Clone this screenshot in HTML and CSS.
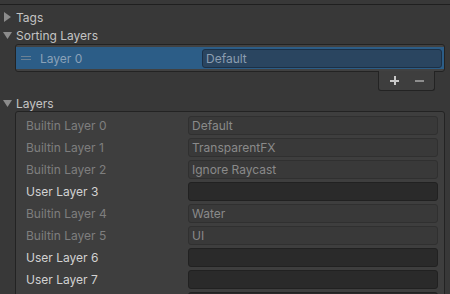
FILE: index.html
```html
<!DOCTYPE html>
<html lang="en">
<head>
    <meta charset="UTF-8">
    <title>Tags and Layers</title>
    <link rel="stylesheet" href="styles.css">
</head>
<body>
    <div class="topline"></div>

    <div class="foldout">
        <svg class="arrow" width="10" height="10" viewBox="0 0 10 10"><polygon points="1,0 8,5 1,10" /></svg>
        <span>Tags</span>
    </div>

    <div class="foldout">
        <svg class="arrow" width="10" height="10" viewBox="0 0 10 10"><polygon points="0,2 9,2 4.5,9" /></svg>
        <span>Sorting Layers</span>
    </div>

    <div class="list sorting">
        <div class="sort-row">
            <span class="handle"></span>
            <span class="sort-name">Layer 0</span>
            <div class="field sel-field">Default</div>
        </div>
    </div>
    <div class="list-footer">
        <div class="footer-box">
            <span class="btn plus"></span>
            <span class="btn minus"></span>
        </div>
    </div>

    <div class="foldout layers-head">
        <svg class="arrow" width="10" height="10" viewBox="0 0 10 10"><polygon points="0,2 9,2 4.5,9" /></svg>
        <span>Layers</span>
    </div>

    <div class="list layers">
        <div class="layer-row builtin">
            <span class="label">Builtin Layer 0</span>
            <div class="field">Default</div>
        </div>
        <div class="layer-row builtin">
            <span class="label">Builtin Layer 1</span>
            <div class="field">TransparentFX</div>
        </div>
        <div class="layer-row builtin">
            <span class="label">Builtin Layer 2</span>
            <div class="field">Ignore Raycast</div>
        </div>
        <div class="layer-row user">
            <span class="label">User Layer 3</span>
            <div class="field"></div>
        </div>
        <div class="layer-row builtin">
            <span class="label">Builtin Layer 4</span>
            <div class="field">Water</div>
        </div>
        <div class="layer-row builtin">
            <span class="label">Builtin Layer 5</span>
            <div class="field">UI</div>
        </div>
        <div class="layer-row user">
            <span class="label">User Layer 6</span>
            <div class="field"></div>
        </div>
        <div class="layer-row user">
            <span class="label">User Layer 7</span>
            <div class="field"></div>
        </div>
        <div class="layer-row user">
            <span class="label"></span>
            <div class="field"></div>
        </div>
    </div>
</body>
</html>
```

FILE: styles.css
```css
body {
    margin: 0;
    padding: 0;
    height: 294px;
    overflow: hidden;
    background: #383838;
    color: #c4c4c4;
    font-family: 'Inter', 'Noto Sans', sans-serif;
    font-size: 12px;
}

.topline {
    height: 4px;
    border-bottom: 1px solid #1f1f1f;
    margin-bottom: 3px;
}

.foldout {
    height: 18px;
    display: flex;
    align-items: center;
    padding-left: 3px;
}

.foldout .arrow {
    fill: #8c8c8c;
    margin-right: 3px;
}

.list {
    margin: 0 5px 0 15px;
    border: 1px solid #232323;
    border-radius: 3px;
    background: #414141;
}

.sorting {
    padding: 2px 0;
}

.sort-row {
    height: 22px;
    background: #2c5d87;
    display: flex;
    align-items: center;
    padding-left: 5px;
    padding-right: 2px;
}

.handle {
    width: 10px;
    height: 4px;
    border-top: 1px solid #6c8194;
    border-bottom: 1px solid #6c8194;
    margin-right: 9px;
    box-sizing: border-box;
}

.sort-name {
    color: #8aa1b8;
    width: 162px;
}

.field {
    flex: 1;
    height: 19px;
    box-sizing: border-box;
    border: 1px solid #212121;
    border-radius: 3px;
    background: #2a2a2a;
    padding-left: 3px;
    line-height: 17px;
    color: #8a8a8a;
}

.sel-field {
    background: #2a4560;
    border-color: #1c3046;
    color: #8c9db0;
}

.list-footer {
    display: flex;
    justify-content: flex-end;
    margin-right: 15px;
    margin-top: -1px;
}

.footer-box {
    width: 57px;
    height: 20px;
    box-sizing: border-box;
    background: #3e3e3e;
    border: 1px solid #232323;
    border-top: none;
    border-radius: 0 0 3px 3px;
    display: flex;
    align-items: center;
    justify-content: center;
    gap: 16px;
}

/* + and - drawn with css bars */
.btn {
    position: relative;
    width: 9px;
    height: 9px;
}

.btn::before,
.plus::after {
    content: '';
    position: absolute;
    left: 0;
    top: 4px;
    width: 9px;
    height: 2px;
    background: #c8c8c8;
}

.plus::after {
    left: 4px;
    top: 0;
    width: 2px;
    height: 9px;
}

.minus::before {
    background: #8e8e8e;
}

.layers-head {
    margin-top: 3px;
}

.layers {
    margin-top: -1px;
    padding: 3px 6px 3px 10px;
    background: #3e3e3e;
}

.layer-row {
    display: flex;
    align-items: center;
    height: 20px;
    margin-bottom: 2px;
}

.layer-row .label {
    width: 162px;
}

.builtin .label {
    color: #7e7e7e;
}

.user .label {
    color: #d2d2d2;
}

.builtin .field {
    background: #393939;
    border-color: #303030;
}
```
